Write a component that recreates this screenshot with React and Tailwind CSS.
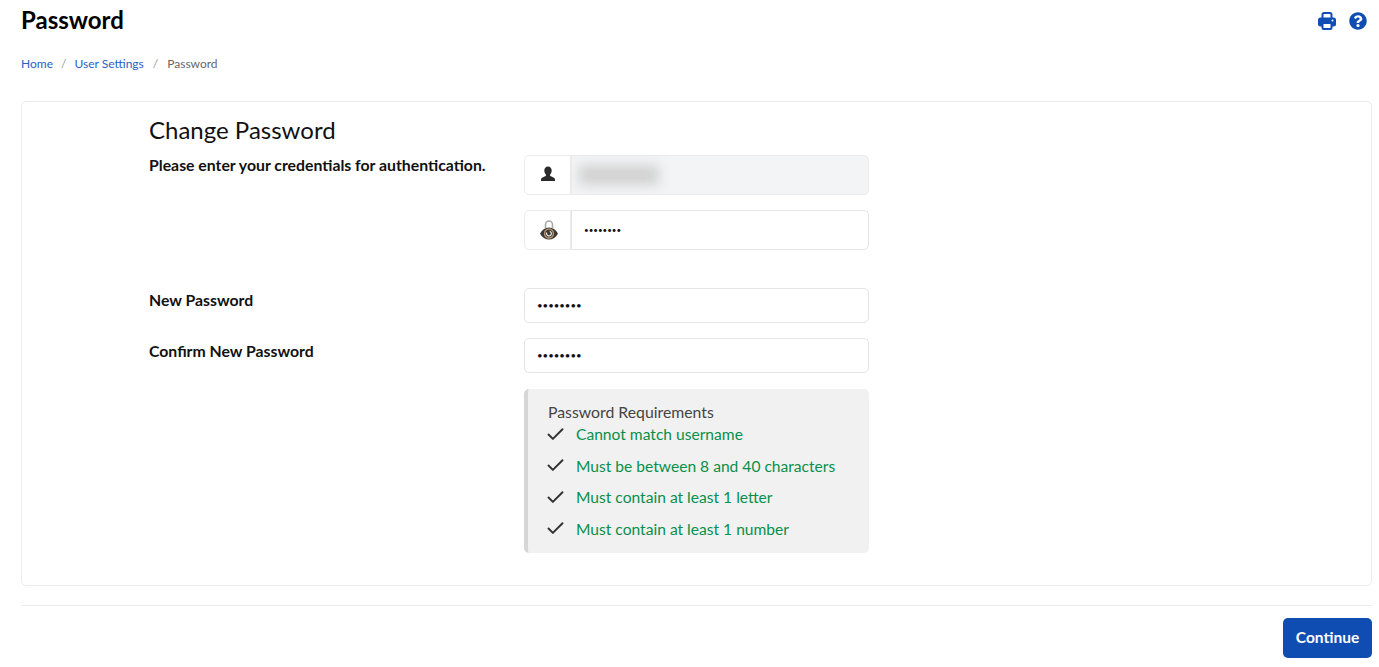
import { FaQuestionCircle } from "react-icons/fa";
import { Check } from "lucide-react";

const font = "font-['Lato','Open_Sans',sans-serif]";

const requirements = [
  "Cannot match username",
  "Must be between 8 and 40 characters",
  "Must contain at least 1 letter",
  "Must contain at least 1 number",
];

function PrintIcon() {
  return (
    <svg width="18" height="18" viewBox="0 0 18 18" className="translate-x-[1px]">
      <path fill="none" stroke="currentColor" strokeWidth="2" d="M4.500 7V2.500a1.500 1.500 0 0 1 1.500-1.500h6a1.500 1.500 0 0 1 1.500 1.500V7" />
      <rect x="0" y="5.500" width="18" height="9" rx="2.500" fill="currentColor" />
      <rect x="4.500" y="11" width="9" height="6" rx="1" fill="#fff" stroke="currentColor" strokeWidth="2" />
      <circle cx="14.500" cy="8.500" r="1" fill="#fff" />
    </svg>
  );
}

function UserIcon() {
  return (
    <svg width="16" height="16" viewBox="0 0 16 16" className="text-[#2b2b2b]">
      <path fill="currentColor" d="M8 0.5c2.3 0 3.7 1.7 3.7 4 0 1.7-.7 3.2-1.6 4.1v1.3c1.6.7 4.4 1.3 4.9 3v2.1H1v-2.1c.5-1.7 3.3-2.3 4.9-3V8.6C5 7.7 4.3 6.200 4.300 4.500c0-2.300 1.400-4 3.700-4z" />
    </svg>
  );
}

function LockEyeIcon() {
  return (
    <svg width="20" height="22" viewBox="0 0 20 22">
      <path fill="none" stroke="#a8a8a8" strokeWidth="1.6" d="M6.500 9V5.500a3.500 3.500 0 0 1 7 0V9" />
      <path fill="#3a3a3a" d="M1 14.500C3 10.500 6.500 8.500 10 8.500s7 2 9 6c-2 4-5.500 6-9 6s-7-2-9-6z" />
      <circle cx="10" cy="14.500" r="4.400" fill="none" stroke="#b5926a" strokeWidth="1.500" />
      <path fill="none" stroke="#e6e6e6" strokeWidth="1.200" d="M7.800 13.500a2.400 2.400 0 1 0 3-1.200" />
    </svg>
  );
}

export default function App() {
  return (
    <div className={`${font} min-h-[667px] bg-white pl-[21px] pr-[7px] text-[#111]`}>
      {/* Header */}
      <div className="flex h-[41px] items-center justify-between">
        <h1 className="pb-[2px] text-[24px] font-bold leading-none text-black">Password</h1>
        <div className="flex items-center gap-[14px] pr-[5px] text-[#0f4db3]">
          <PrintIcon />
          <FaQuestionCircle size={18} />
        </div>
      </div>

      {/* Breadcrumb */}
      <div className="mt-[15px] flex h-[16px] items-center text-[12px] leading-none">
        <a className="text-[#2a62c4]">Home</a>
        <span className="mx-[8px] text-[#9a9a9a]">/</span>
        <a className="text-[#2a62c4]">User Settings</a>
        <span className="mx-[9px] text-[#9a9a9a]">/</span>
        <span className="text-[#666]">Password</span>
      </div>

      {/* Card */}
      <div className="mt-[29px] h-[485px] rounded-[5px] border border-[#ececec] pl-[127px] pt-[13px]">
        <h2 className="text-[24px] font-normal leading-[29px] text-[#111]">Change Password</h2>

        <div className="mt-[11px] flex">
          <div className="w-[375px] text-[15.800px] font-bold leading-[19px]">
            Please enter your credentials for authentication.
          </div>
          <div className="w-[345px]">
            <div className="flex h-[40px]">
              <div className="flex w-[47px] items-center justify-center rounded-l-[5px] border border-[#ececec] bg-white pb-[3px]">
                <UserIcon />
              </div>
              <div className="flex flex-1 items-center rounded-r-[5px] border border-[#ececec] bg-[#f3f4f6] pl-[7px]">
                <div className="h-[20px] w-[80px] bg-[#d2d2d2] blur-[6px]" />
              </div>
            </div>
            <div className="mt-[15px] flex h-[40px]">
              <div className="flex w-[47px] items-center justify-center rounded-l-[5px] border border-[#ececec] bg-white pl-[2px]">
                <LockEyeIcon />
              </div>
              <div className="flex flex-1 items-center rounded-r-[5px] border border-[#e4e4e4] bg-white pl-[12px]">
                <span className="text-[8px] leading-none text-[#111]">••••••••</span>
              </div>
            </div>
          </div>
        </div>

        <div className="mt-[38px] flex">
          <label className="w-[375px] pt-[2px] text-[15.800px] font-bold leading-[19px]">New Password</label>
          <div className="flex h-[35px] w-[345px] items-center rounded-[5px] border border-[#e4e4e4] pl-[12px]">
            <span className="text-[9.600px] leading-none text-[#111]">••••••••</span>
          </div>
        </div>

        <div className="mt-[15px] flex">
          <label className="w-[375px] pt-[3px] text-[15.800px] font-bold leading-[19px]">Confirm New Password</label>
          <div className="flex h-[35px] w-[345px] items-center rounded-[5px] border border-[#e4e4e4] pl-[12px]">
            <span className="text-[9.600px] leading-none text-[#111]">••••••••</span>
          </div>
        </div>

        <div className="mt-[16px] flex">
          <div className="w-[375px]" />
          <div className="h-[164px] w-[345px] rounded-[5px] border-l-[4px] border-[#d6d6d6] bg-[#f1f1f1] pl-[20px] pt-[14px]">
            <div className="text-[15.800px] leading-[18px] text-[#444]">Password Requirements</div>
            <ul className="mt-[3px]">
              {requirements.map((r) => (
                <li key={r} className="mb-[10.500px] flex h-[21px] items-center">
                  <Check size={21} strokeWidth={2.250} className="-ml-[3px] -mt-[1px] text-[#333]" />
                  <span className="ml-[10px] text-[15.600px] leading-[21px] text-[#0a8f4a]">{r}</span>
                </li>
              ))}
            </ul>
          </div>
        </div>
      </div>

      {/* Footer */}
      <div className="mt-[19px] flex justify-end border-t border-[#ececec] pt-[12px]">
        <button className="h-[40px] w-[89px] rounded-[5px] bg-[#0f4db3] pb-[1px] text-[15.500px] font-bold text-white">
          Continue
        </button>
      </div>
    </div>
  );
}
